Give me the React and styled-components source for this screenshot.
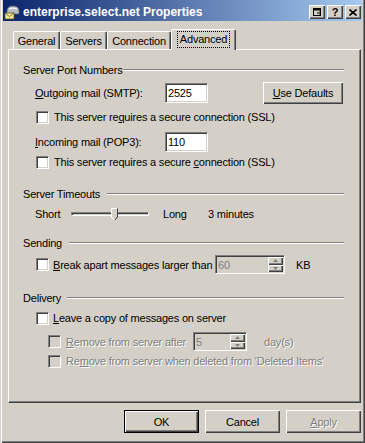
import React from 'react';
import styled, { createGlobalStyle, css } from 'styled-components';

const FACE = '#d4d0c8';
const SHADOW = '#808080';
const DARK = '#404040';

const Global = createGlobalStyle`
  html, body { margin: 0; padding: 0; background: ${FACE}; overflow: hidden; }
  body {
    font-family: "Liberation Sans", Arial, sans-serif;
    font-size: 11px;
    letter-spacing: -0.2px;
    color: #000;
  }
`;

const raised = css`
  box-shadow: inset 1px 1px #fff, inset -1px -1px ${DARK}, inset -2px -2px ${SHADOW};
`;

const sunken = css`
  border: 1px solid;
  border-color: ${SHADOW} #fff #fff ${SHADOW};
  box-shadow: inset 1px 1px ${DARK}, inset -1px -1px ${FACE};
`;

const Window = styled.div`
  width: 365px;
  height: 443px;
  box-sizing: border-box;
  background: ${FACE};
  padding: 0 3px 3px 3px;
  display: flex;
  flex-direction: column;
  box-shadow: inset 1px 0 ${FACE}, inset 2px 0 #fff, inset -1px -1px ${DARK}, inset -2px -2px ${SHADOW};
`;

const TitleBar = styled.div`
  height: 21px;
  box-sizing: border-box;
  padding: 3px 1px 0 1px;
  display: flex;
  align-items: center;
  background: linear-gradient(to right, #0a246a, #a6caf0);
`;

const Title = styled.div`
  flex: 1;
  margin-left: 3px;
  color: #fff;
  font-weight: bold;
  font-size: 12px;
  letter-spacing: 0;
  white-space: nowrap;
`;

const CapButtons = styled.div`
  display: flex;
  gap: 2px;
`;

const CapBtn = styled.div`
  width: 16px;
  height: 14px;
  box-sizing: border-box;
  background: ${FACE};
  ${raised};
  display: flex;
  align-items: center;
  justify-content: center;
  font-weight: bold;
  font-size: 11px;
  letter-spacing: 0;
`;

const Body = styled.div`
  flex: 1;
  display: flex;
  flex-direction: column;
  padding: 8px 1px 0 5px;
`;

const Tabs = styled.div`
  height: 20px;
  display: flex;
  align-items: flex-end;
  padding-left: 5px;
  position: relative;
  z-index: 2;
`;

const Tab = styled.div`
  width: ${p => p.w}px;
  height: ${p => (p.active ? 21 : 18)}px;
  margin-bottom: ${p => (p.active ? -1 : 0)}px;
  box-sizing: border-box;
  background: ${FACE};
  border-top: 1px solid #fff;
  border-left: 1px solid #fff;
  border-right: 1px solid ${DARK};
  border-radius: 2px 2px 0 0;
  box-shadow: inset -1px 0 ${SHADOW};
  display: flex;
  justify-content: center;
  align-items: flex-start;
  padding-top: ${p => (p.active ? 2 : 3)}px;
  white-space: nowrap;
`;

const Focus = styled.span`
  outline: 1px dotted #000;
  padding: 0 2px 1px 2px;
  line-height: 14px;
`;

const Panel = styled.div`
  height: 354px;
  box-sizing: border-box;
  border: 1px solid;
  border-color: #fff ${DARK} ${DARK} #fff;
  box-shadow: inset -1px -1px ${SHADOW};
  padding: 0 16px 0 14px;
  display: flex;
  flex-direction: column;
`;

const Header = styled.div`
  margin-top: ${p => p.mt}px;
  height: 13px;
  display: flex;
  align-items: center;
`;

const HeaderLabel = styled.span`
  width: ${p => p.w}px;
  flex: none;
  white-space: nowrap;
`;

const Rule = styled.div`
  flex: 1;
  height: 0;
  border-top: 1px solid ${SHADOW};
  border-bottom: 1px solid #fff;
`;

const Row = styled.div`
  margin-top: ${p => p.mt}px;
  margin-left: ${p => p.indent}px;
  height: ${p => p.h}px;
  display: flex;
  align-items: center;
  white-space: nowrap;
`;

const Label = styled.span`
  width: ${p => (p.w ? `${p.w}px` : 'auto')};
  flex: none;
  margin-left: ${p => p.ml || 0}px;
  color: ${p => (p.disabled ? SHADOW : '#000')};
  text-shadow: ${p => (p.disabled ? '1px 1px #fff' : 'none')};
`;

const Check = styled.span`
  width: 13px;
  height: 13px;
  box-sizing: border-box;
  flex: none;
  margin-right: ${p => p.gap}px;
  background: ${p => (p.disabled ? FACE : '#fff')};
  ${sunken};
`;

const Edit = styled.div`
  width: ${p => p.w}px;
  height: ${p => p.h}px;
  margin-left: ${p => p.ml || 0}px;
  box-sizing: border-box;
  flex: none;
  ${sunken};
  background: ${p => (p.disabled ? FACE : '#fff')};
  color: ${p => (p.disabled ? SHADOW : '#000')};
  display: flex;
  align-items: center;
`;

const EditText = styled.span`
  flex: 1;
  padding-left: 2px;
  font-size: 11px;
`;

const SpinCol = styled.div`
  width: 15px;
  align-self: stretch;
  margin: 1px;
  display: flex;
  flex-direction: column;
`;

const SpinBtn = styled.div`
  flex: 1;
  background: ${FACE};
  box-shadow: inset 1px 1px #fff, inset -1px -1px ${DARK}, inset -2px -2px ${SHADOW};
  display: flex;
  align-items: center;
  justify-content: center;
`;

const Button = styled.div`
  width: ${p => p.w}px;
  height: ${p => p.h}px;
  margin-left: ${p => p.ml || 0}px;
  box-sizing: border-box;
  flex: none;
  background: ${FACE};
  display: flex;
  align-items: center;
  justify-content: center;
  color: ${p => (p.disabled ? SHADOW : '#000')};
  text-shadow: ${p => (p.disabled ? '1px 1px #fff' : 'none')};
  ${p =>
    p.isDefault
      ? css`
          border: 1px solid #000;
          box-shadow: inset 1px 1px #fff, inset -1px -1px ${DARK}, inset -2px -2px ${SHADOW};
        `
      : raised};
`;

const ButtonRow = styled.div`
  margin-top: 7px;
  display: flex;
  justify-content: flex-end;
  gap: 6px;
`;

const Track = styled.div`
  width: ${p => p.w}px;
  height: 4px;
  box-sizing: border-box;
  flex: none;
  border: 1px solid;
  border-color: ${SHADOW} #fff #fff ${SHADOW};
  box-shadow: inset 1px 1px ${DARK};
  margin-left: ${p => p.ml}px;
  display: flex;
  align-items: center;
  padding-left: ${p => p.pos}px;
`;

const Thumb = styled.svg`
  flex: none;
  margin-top: 2px;
`;

const U = styled.u`
  text-decoration: underline;
  text-underline-offset: 1px;
`;

const Arrow = ({ up, disabled }) => (
  <svg width="5" height="3" viewBox="0 0 5 3">
    <path
      d={up ? 'M2.5 0 L5 3 L0 3 Z' : 'M0 0 L5 0 L2.5 3 Z'}
      fill={disabled ? SHADOW : '#000'}
    />
  </svg>
);

const Spin = ({ w, h, ml, value, disabled }) => (
  <Edit w={w} h={h} ml={ml} disabled={disabled}>
    <EditText>{value}</EditText>
    <SpinCol>
      <SpinBtn>
        <Arrow up disabled={disabled} />
      </SpinBtn>
      <SpinBtn>
        <Arrow disabled={disabled} />
      </SpinBtn>
    </SpinCol>
  </Edit>
);

const AppIcon = () => (
  <svg width="16" height="16" viewBox="0 0 16 16">
    <path d="M3 7 Q3 2 9 2 Q15 2 15 7 L15 10 L3 10 Z" fill="#b8bcc4" stroke="#5a6070" strokeWidth="0.8" />
    <path d="M5 5 Q9 3 13 5" stroke="#ffffff" strokeWidth="1" fill="none" />
    <rect x="1" y="9" width="9" height="6" fill="#f4e79a" stroke="#6b5a20" strokeWidth="0.8" />
    <path d="M1 9 L5.5 12.5 L10 9" stroke="#6b5a20" strokeWidth="0.8" fill="none" />
  </svg>
);

export default function App() {
  return (
    <>
      <Global />
      <Window>
        <TitleBar>
          <AppIcon />
          <Title>enterprise.select.net Properties</Title>
          <CapButtons>
            <CapBtn>
              <svg width="9" height="8" viewBox="0 0 9 8">
                <rect x="0.5" y="0.5" width="7" height="7" fill="none" stroke="#000" />
                <rect x="0.5" y="0.5" width="7" height="2" fill="#000" />
                <path d="M4 5 L8 5 M6.5 3.5 L8 5 L6.5 6.5" stroke="#000" fill="none" />
              </svg>
            </CapBtn>
            <CapBtn>?</CapBtn>
            <CapBtn>
              <svg width="8" height="7" viewBox="0 0 8 7">
                <path d="M0.5 0.5 L7.5 6.5 M7.5 0.5 L0.5 6.5" stroke="#000" strokeWidth="1.6" />
              </svg>
            </CapBtn>
          </CapButtons>
        </TitleBar>
        <Body>
          <Tabs>
            <Tab w={47}>General</Tab>
            <Tab w={47}>Servers</Tab>
            <Tab w={64}>Connection</Tab>
            <Tab w={65} active>
              <Focus>Advanced</Focus>
            </Tab>
          </Tabs>
          <Panel>
            <Header mt={13}>
              <HeaderLabel w={100}>Server Port Numbers</HeaderLabel>
              <Rule />
            </Header>
            <Row mt={6} indent={12} h={22}>
              <Label w={130}>
                <U>O</U>utgoing mail (SMTP):
              </Label>
              <Edit w={43} h={20}>
                <EditText>2525</EditText>
              </Edit>
              <Button w={80} h={22} ml={55}>
                <span>
                  <U>U</U>se Defaults
                </span>
              </Button>
            </Row>
            <Row mt={6} indent={13} h={14}>
              <Check gap={5} />
              <Label>
                This server re<U>q</U>uires a secure connection (SSL)
              </Label>
            </Row>
            <Row mt={8} indent={12} h={20}>
              <Label w={130}>
                <U>I</U>ncoming mail (POP3):
              </Label>
              <Edit w={43} h={20}>
                <EditText>110</EditText>
              </Edit>
            </Row>
            <Row mt={3} indent={13} h={14}>
              <Check gap={5} />
              <Label>
                This server requires a secure <U>c</U>onnection (SSL)
              </Label>
            </Row>

            <Header mt={18}>
              <HeaderLabel w={84}>Server Timeouts</HeaderLabel>
              <Rule />
            </Header>
            <Row mt={6} indent={12} h={15}>
              <Label w={36}>Short</Label>
              <Track w={78} ml={0} pos={39}>
                <Thumb width="7" height="13" viewBox="0 0 7 13">
                  <path d="M0.5 0.5 H6.5 V9 L3.5 12.5 L0.5 9 Z" fill={FACE} />
                  <path d="M0.5 9 V0.5 H6" stroke="#fff" fill="none" />
                  <path d="M6.5 0.5 V9 L3.5 12.5" stroke={DARK} fill="none" />
                  <path d="M0.5 9 L3.5 12.5" stroke="#fff" fill="none" />
                </Thumb>
              </Track>
              <Label ml={14} w={45}>Long</Label>
              <Label>3 minutes</Label>
            </Row>

            <Header mt={15}>
              <HeaderLabel w={46}>Sending</HeaderLabel>
              <Rule />
            </Header>
            <Row mt={6} indent={13} h={19}>
              <Check gap={4} />
              <Label w={162}>
                <U>B</U>reak apart messages larger than
              </Label>
              <Spin w={70} h={19} value="60" disabled />
              <Label ml={11}>KB</Label>
            </Row>

            <Header mt={17}>
              <HeaderLabel w={44}>Delivery</HeaderLabel>
              <Rule />
            </Header>
            <Row mt={7} indent={13} h={14}>
              <Check gap={4} />
              <Label>
                <U>L</U>eave a copy of messages on server
              </Label>
            </Row>
            <Row mt={7} indent={25} h={19}>
              <Check gap={5} disabled />
              <Label w={127} disabled>
                <U>R</U>emove from server after
              </Label>
              <Spin w={54} h={19} value="5" disabled />
              <Label ml={17} disabled>
                day(s)
              </Label>
            </Row>
            <Row mt={3} indent={25} h={14}>
              <Check gap={5} disabled />
              <Label disabled>
                Re<U>m</U>ove from server when deleted from 'Deleted Items'
              </Label>
            </Row>
          </Panel>
          <ButtonRow>
            <Button w={75} h={23} isDefault>
              OK
            </Button>
            <Button w={75} h={23}>
              Cancel
            </Button>
            <Button w={75} h={23} disabled>
              <span>
                <U>A</U>pply
              </span>
            </Button>
          </ButtonRow>
        </Body>
      </Window>
    </>
  );
}
